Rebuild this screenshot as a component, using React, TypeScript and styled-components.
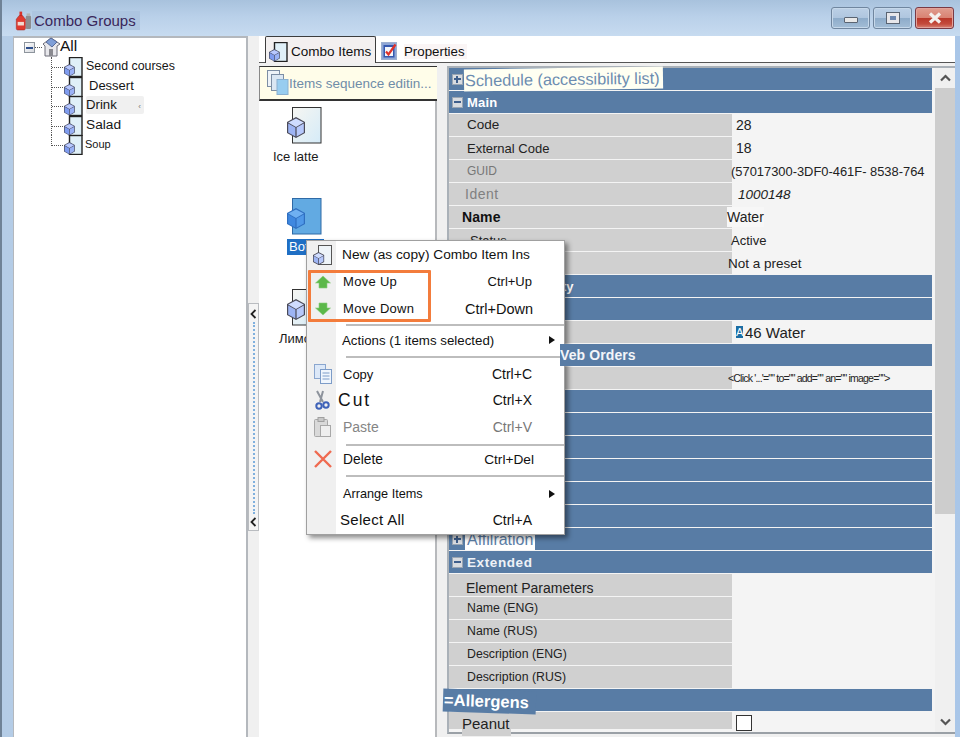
import React from "react";
import styled, { createGlobalStyle } from "styled-components";

const Global = createGlobalStyle`
  html, body { margin: 0; padding: 0; background: #a9c6e8; }
  body { font-family: "Liberation Sans", Arial, sans-serif; color: #1c1c1c; }
  * { box-sizing: border-box; }
`;

const Window = styled.div`
  position: relative;
  width: 960px;
  height: 737px;
  display: flex;
  flex-direction: column;
  overflow: hidden;
  background: linear-gradient(90deg, #b4cce6 0%, #bcd2ea 50%, #a9c6e8 100%);
  border-left: 2px solid #6f8296;
`;

const TitleBar = styled.div`
  height: 36px;
  display: flex;
  align-items: center;
  padding: 5px 6px 0 13px;
  background: linear-gradient(180deg, #a8c2dd 0%, #b9d0e9 45%, #c7dbf0 100%);
`;

const TitleText = styled.span`
  padding: 1px 4px 1px 2px;
  font-size: 15px;
  color: #39265a;
  background: #adc5e0;
`;

const Controls = styled.div`
  margin-left: auto;
  margin-top: -5px;
  display: flex;
  gap: 3px;
`;

const CtlButton = styled.div<{ $close?: boolean }>`
  width: 39px;
  height: 22px;
  border-radius: 3px;
  display: flex;
  align-items: center;
  justify-content: center;
  border: 1px solid ${(p) => (p.$close ? "#7a3a44" : "#70869f")};
  box-shadow: inset 0 0 0 1px ${(p) => (p.$close ? "#e2a39b" : "#c6d8ea")};
  background: ${(p) =>
    p.$close
      ? "linear-gradient(180deg,#e09d90 0%,#d98273 48%,#b9372a 52%,#c44b3c 80%,#d88476 100%)"
      : "linear-gradient(180deg,#bcd0e6 0%,#afc6df 48%,#8eacca 52%,#a3bdd6 100%)"};
`;

const MinGlyph = styled.div`
  width: 14px;
  height: 6px;
  margin-top: 3px;
  border: 1px solid #5a6472;
  border-radius: 1px;
  background: #e8e8e8;
`;

const MaxGlyph = styled.div`
  width: 12px;
  height: 10px;
  border: 3px solid #e6e6ea;
  outline: 1px solid #5a6472;
  background: #6f89b0;
`;

const Body = styled.div`
  flex: 1;
  display: flex;
  min-height: 0;
  margin: 0 5px 0 11px;
  background: #f0f0f0;
`;

const TreePanel = styled.div`
  width: 235px;
  background: #fff;
  border-top: 2px solid #b4b8bd;
  border-left: 1px solid #b4b8bd;
  border-right: 2px solid #b4b8bd;
  padding: 0 0 0 10px;
`;

const TreeRoot = styled.div`
  display: flex;
  align-items: center;
  height: 19px;
`;

const Expander = styled.span`
  width: 11px;
  height: 11px;
  border: 1px solid #8d949c;
  background: linear-gradient(135deg, #fff, #d5d8dd);
  display: flex;
  align-items: center;
  justify-content: center;
  &::before {
    content: "";
    width: 7px;
    height: 2px;
    background: #2e4f8c;
  }
`;

const RootDash = styled.span`
  width: 7px;
  border-top: 1px dotted #555;
`;

const RootText = styled.span`
  font-size: 15.5px;
  color: #111;
  margin-left: -1px;
  margin-top: -3px;
`;

const TreeChildren = styled.div`
  margin-left: 27px;
`;

const TreeRow = styled.div<{ $h: number }>`
  display: flex;
  align-items: flex-start;
  height: ${(p) => p.$h}px;
`;

const Connector = styled.span<{ $last?: boolean }>`
  position: relative;
  width: 13px;
  height: ${(p) => (p.$last ? "11px" : "100%")};
  flex: none;
  border-left: 1px dotted #555;
  &::after {
    content: "";
    position: absolute;
    left: 0;
    top: 10px;
    width: 13px;
    border-top: 1px dotted #555;
  }
`;

const TreeLabel = styled.span<{ $size: number; $pad: number; $shade?: boolean }>`
  font-size: ${(p) => p.$size}px;
  margin-left: ${(p) => p.$pad}px;
  line-height: 18px;
  height: 18px;
  color: #161616;
  display: flex;
  justify-content: space-between;
  width: ${(p) => (p.$shade ? "58px" : "auto")};
  background: ${(p) => (p.$shade ? "#f0f0f0" : "transparent")};
  border-radius: 2px;
`;

const Tick = styled.span`
  font-size: 8px;
  color: #777;
  padding: 2px 3px 0 0;
`;

const Splitter = styled.div`
  width: 11px;
  display: flex;
  flex-direction: column;
  padding-top: 267px;
`;

const SplitStrip = styled.div`
  height: 228px;
  width: 11px;
  border: 1px solid #b9bcc0;
  background: #f4f4f4;
  display: flex;
  flex-direction: column;
  align-items: center;
  justify-content: space-between;
  padding: 5px 0 3px;
`;

const SplitDots = styled.span`
  flex: 1;
  margin: 3px 0;
  border-left: 2px dotted #7fb0de;
`;

const Right = styled.div`
  flex: 1;
  min-width: 0;
  display: flex;
  flex-direction: column;
`;

const TabBar = styled.div`
  height: 27px;
  flex: none;
  display: flex;
  align-items: flex-end;
  padding-left: 6px;
  background: #fff;
  border-bottom: 1px solid #555;
`;

const ActiveTab = styled.div`
  height: 27px;
  width: 111px;
  margin-bottom: -1px;
  padding: 3px 0 0 3px;
  display: flex;
  gap: 3px;
  align-items: center;
  background: #f3f0f0;
  border: 1px solid #3d3d3d;
  border-bottom: none;
  border-radius: 2px 2px 0 0;
  font-size: 13.5px;
  color: #111;
`;

const PlainTab = styled.div`
  height: 24px;
  padding: 2px 0 0 5px;
  display: flex;
  align-items: center;
  gap: 6px;
  font-size: 13.3px;
  color: #111;
`;

const TabName = styled.span`
  background: #faf5f5;
  padding-right: 2px;
`;

const Content = styled.div`
  flex: 1;
  min-height: 0;
  display: flex;
  padding-top: 3px;
  background: #f0f0f0;
`;

const Middle = styled.div`
  width: 178px;
  flex: none;
  display: flex;
  flex-direction: column;
`;

const Hint = styled.div`
  height: 35px;
  flex: none;
  padding-left: 7px;
  display: flex;
  align-items: center;
  background: #fffde9;
  border-top: 1px solid #333;
  border-bottom: 2px solid #333;
  border-left: 1px solid #888;
  font-size: 13.5px;
  color: #6f8ca8;
  white-space: nowrap;
`;

const ItemList = styled.div`
  flex: 1;
  background: #fff;
  border-right: 2px solid #b7b9bc;
  padding-top: 6px;
`;

const Item = styled.div`
  height: 91px;
`;

const ItemIcon = styled.div`
  padding-left: 28px;
  height: 39px;
`;

const ItemLabel = styled.div<{ $x: number; $sel?: boolean }>`
  display: inline-block;
  margin-left: ${(p) => p.$x}px;
  margin-top: ${(p) => (p.$sel ? "-1px" : "3px")};
  padding: 0 2px;
  font-size: 13px;
  line-height: 16px;
  white-space: nowrap;
  color: ${(p) => (p.$sel ? "#fff" : "#1a1a1a")};
  background: ${(p) => (p.$sel ? "#1f6fc4" : "transparent")};
`;

const PropPanel = styled.div`
  margin: 0 0 3px 10px;
  flex: 1;
  min-width: 0;
  display: flex;
  background: #f4f4f4;
  border-top: 2px solid #aab1b8;
  border-left: 2px solid #aab1b8;
  border-bottom: 2px solid #9aa0a6;
`;

const Grid = styled.div`
  width: 483px;
  flex: none;
  display: flex;
  flex-direction: column;
  gap: 1px;
`;

const Section = styled.div`
  height: 22px;
  flex: none;
  display: flex;
  align-items: center;
  background: #587ca5;
  color: #fff;
`;

const SecBox = styled.span<{ $plus?: boolean }>`
  position: relative;
  width: 11px;
  height: 11px;
  margin-left: 3px;
  flex: none;
  background: #d9dce0;
  border: 1px solid #9aa5b2;
  &::before {
    content: "";
    position: absolute;
    left: 1px;
    top: 3px;
    width: 7px;
    height: 2px;
    background: #3f5f8c;
  }
  &::after {
    content: "";
    display: ${(p) => (p.$plus ? "block" : "none")};
    position: absolute;
    left: 3px;
    top: 1px;
    width: 2px;
    height: 7px;
    background: #3f5f8c;
  }
`;

const SecText = styled.span`
  margin-left: 4px;
  font-size: 13px;
  font-weight: 700;
  letter-spacing: 0.2px;
`;

const SecStretched = styled(SecText)`
  font-size: 13.5px;
  letter-spacing: 0.6px;
  color: #eef2f7;
`;

const SchedulePatch = styled.span`
  margin-left: 1px;
  height: 22px;
  padding: 0 3px 0 1px;
  display: flex;
  align-items: center;
  font-size: 16.3px;
  color: #6c8cb0;
  background: #fffff2;
  transform: rotate(-0.8deg);
`;

const AffilPatch = styled.span`
  margin-left: 2px;
  height: 21px;
  padding: 2px 2px 0;
  display: flex;
  align-items: center;
  font-size: 16px;
  color: #5c80a8;
  background: #fff;
`;

const TailText = styled.span<{ $x: number }>`
  margin-left: ${(p) => p.$x}px;
  font-size: 13px;
  font-weight: 700;
  white-space: nowrap;
`;

const WebOrders = styled.span`
  position: relative;
  z-index: 6;
  margin-left: 111px;
  height: 22px;
  display: flex;
  align-items: center;
  background: #587ca5;
  font-size: 14px;
  font-weight: 700;
  letter-spacing: 0.1px;
  color: #f2f5f9;
`;

const AllergensPatch = styled.div`
  position: relative;
  left: -6px;
  top: 1px;
  width: 93px;
  height: 23px;
  padding-left: 1px;
  display: flex;
  align-items: center;
  background: #587ca5;
  color: #fff;
  font-size: 16.5px;
  font-weight: 700;
  transform: rotate(1.8deg);
`;

const PropRow = styled.div<{ $short?: boolean }>`
  height: ${(p) => (p.$short ? "17px" : "22px")};
  flex: none;
  display: flex;
`;

const LabelCell = styled.div`
  width: 283px;
  flex: none;
  display: flex;
  align-items: center;
  background: #d0d0d0;
  white-space: nowrap;
`;

const LabelText = styled.span<{
  $x: number;
  $size: number;
  $color?: string;
  $bold?: boolean;
  $ls?: number;
  $dy?: number;
}>`
  margin-left: ${(p) => p.$x}px;
  font-size: ${(p) => p.$size}px;
  font-weight: ${(p) => (p.$bold ? 700 : 400)};
  letter-spacing: ${(p) => p.$ls ?? 0}px;
  color: ${(p) => p.$color ?? "#222"};
  transform: translateY(${(p) => p.$dy ?? 0}px);
`;

const PeanutPatch = styled.span`
  margin-left: 13px;
  padding-right: 1px;
  height: 24px;
  line-height: 24px;
  font-size: 15px;
  color: #222;
  background: #d0d0d0;
  align-self: flex-start;
`;

const ValueCell = styled.div`
  flex: 1;
  min-width: 0;
  display: flex;
  align-items: center;
  white-space: nowrap;
  background: #f4f4f4;
  position: relative;
`;

const ValueText = styled.span<{
  $x: number;
  $size: number;
  $italic?: boolean;
  $ls?: number;
  $patch?: boolean;
}>`
  margin-left: ${(p) => p.$x}px;
  font-size: ${(p) => p.$size}px;
  font-style: ${(p) => (p.$italic ? "italic" : "normal")};
  letter-spacing: ${(p) => p.$ls ?? 0}px;
  color: #222;
  background: ${(p) => (p.$patch ? "#f7f7f7" : "transparent")};
  line-height: ${(p) => (p.$patch ? "20px" : "normal")};
`;

const BlueA = styled.span`
  margin-left: 4px;
  width: 7px;
  height: 12px;
  background: #1c6ea4;
  color: #fff;
  font-size: 11px;
  line-height: 12px;
  overflow: hidden;
`;

const Check = styled.span`
  position: absolute;
  left: 4px;
  top: 3px;
  width: 16px;
  height: 16px;
  background: #fff;
  border: 1px solid #333;
`;

const Scroll = styled.div`
  margin-left: 3px;
  width: 20px;
  flex: none;
  display: flex;
  flex-direction: column;
  background: #f0f0f0;
`;

const ScrollBtn = styled.div`
  height: 20px;
  flex: none;
  display: flex;
  align-items: center;
  justify-content: center;
`;

const Thumb = styled.div`
  height: 426px;
  flex: none;
  background: #cdcdcd;
`;

const ScrollGap = styled.div`
  flex: 1;
`;

const Menu = styled.div`
  position: absolute;
  z-index: 5;
  left: 304px;
  top: 240px;
  width: 259px;
  height: 295px;
  display: flex;
  flex-direction: column;
  border: 1px solid #a0a0a0;
  background: linear-gradient(90deg, #f0f0f0 29px, #fff 29px);
  box-shadow: 3px 3px 5px rgba(0, 0, 0, 0.45);
`;

const MenuRow = styled.div<{ $h: number }>`
  height: ${(p) => p.$h}px;
  flex: none;
  display: flex;
  align-items: center;
  color: #111;
`;

const MenuIcon = styled.span`
  width: 29px;
  flex: none;
  display: flex;
  justify-content: center;
  padding-left: 2px;
`;

const MenuLabel = styled.span<{ $x: number; $size: number; $ls?: number; $muted?: boolean }>`
  margin-left: ${(p) => p.$x}px;
  font-size: ${(p) => p.$size}px;
  letter-spacing: ${(p) => p.$ls ?? 0}px;
  color: ${(p) => (p.$muted ? "#858585" : "#111")};
  white-space: nowrap;
`;

const Shortcut = styled.span<{ $size?: number; $muted?: boolean; $right?: number }>`
  margin-left: auto;
  margin-right: ${(p) => p.$right ?? 32}px;
  font-size: ${(p) => p.$size ?? 13}px;
  color: ${(p) => (p.$muted ? "#777" : "#111")};
  white-space: nowrap;
`;

const Caret = styled.span`
  margin-left: auto;
  margin-right: 9px;
  width: 0;
  height: 0;
  border-left: 6px solid #111;
  border-top: 4.5px solid transparent;
  border-bottom: 4.5px solid transparent;
`;

const MenuSep = styled.div<{ $h: number }>`
  height: ${(p) => p.$h}px;
  flex: none;
  display: flex;
  align-items: center;
  padding-left: 39px;
  &::before {
    content: "";
    flex: 1;
    height: 2px;
    background: #bdbdbd;
  }
`;

const Highlight = styled.div`
  position: absolute;
  left: 1px;
  top: 29px;
  width: 123px;
  height: 52px;
  border: 3px solid #f37c3c;
  border-radius: 1px;
  pointer-events: none;
`;

const Cube = ({ x, y, s = 1, sel, small }: { x: number; y: number; s?: number; sel?: boolean; small?: boolean }) => (
  <g transform={`translate(${x} ${y}) scale(${s})`}>
    <polygon points="9,0 18,5 18,16 9,21 0,16 0,5" fill={small ? "#4a4f68" : sel ? "#2f6fc0" : "#4a4a58"} />
    <polygon points="9,1.5 16.8,5.5 9,10 1.2,5.5" fill={sel ? "#6fb0f2" : small ? "#b8c8ff" : "#cfdcff"} />
    <polygon points="1.2,6.5 8.4,10.6 8.4,19.4 1.2,15.4" fill={sel ? "#3f88e0" : small ? "#7f9cf0" : "#9db4f4"} />
    <polygon points="9.6,10.6 16.8,6.5 16.8,15.4 9.6,19.4" fill={sel ? "#4f98e8" : small ? "#9ab2f6" : "#b6c8fb"} />
  </g>
);

const DocCube = ({ sel }: { sel?: boolean }) => (
  <svg width="35" height="37" viewBox="0 0 35 37">
    <defs>
      <linearGradient id="docg" x1="0" y1="0" x2="1" y2="1">
        <stop offset="0" stopColor="#f6f6f2" />
        <stop offset="1" stopColor="#d5ebf8" />
      </linearGradient>
    </defs>
    <rect
      x="5.5"
      y="0.5"
      width="28.5"
      height="35.5"
      fill={sel ? "#62aae2" : "url(#docg)"}
      stroke={sel ? "#2f6aa6" : "#333"}
    />
    <Cube x={0} y={10} sel={sel} />
  </svg>
);

const TreeDoc = () => (
  <svg width="19" height="20" viewBox="0 0 19 20" style={{ flex: "none" }}>
    <rect x="5.5" y="0.5" width="12.5" height="19" fill="#e0f0f8" stroke="#222" strokeWidth="1.4" />
    <Cube x={0} y={7} s={0.6} small />
  </svg>
);

const HouseIcon = () => (
  <svg width="19" height="21" viewBox="0 0 19 21" style={{ flex: "none" }}>
    <polygon points="9,1 1,7 3,9 3,19 15,19 15,9 18,7" fill="#e8e8ec" stroke="#6c6c78" />
    <polygon points="4,5 9,1 15,5 10,10" fill="#7f9fd8" stroke="#5a6c98" />
    <rect x="7" y="12" width="4" height="7" fill="#8a8a90" />
  </svg>
);

const Bottle = () => (
  <svg width="17" height="22" viewBox="0 0 19 22" style={{ flex: "none" }}>
    <rect x="12" y="5" width="6" height="15" rx="1.5" fill="#8d8d90" />
    <rect x="13" y="2.5" width="4" height="3" fill="#b3b3b3" />
    <rect x="5" y="0.5" width="3" height="5" fill="#d8322a" />
    <path d="M4.5 5h4l3 4v10.5a1.5 1.5 0 0 1-1.5 1.5H3a1.5 1.5 0 0 1-1.5-1.5V9z" fill="#e03a30" stroke="#a42018" strokeWidth="0.6" />
    <rect x="3" y="12" width="7" height="4" fill="#f3d9d0" />
  </svg>
);

const PropsIcon = () => (
  <svg width="17" height="18" viewBox="0 0 17 18" style={{ flex: "none" }}>
    <rect x="0.5" y="0.5" width="15" height="17" fill="#8ea6d6" stroke="#9fb0d0" />
    <rect x="2.5" y="3" width="11" height="12.5" fill="#3558b0" />
    <rect x="4" y="5" width="8" height="9" fill="#f4f6fb" />
    <path d="M5 9.5l2.5 3 7-10" fill="none" stroke="#e0322a" strokeWidth="2.2" />
  </svg>
);

const HintIcon = () => (
  <svg width="22" height="26" viewBox="0 0 22 26" style={{ flex: "none" }}>
    <rect x="0.5" y="0.5" width="12" height="16" fill="#eef3f8" stroke="#7d8ea4" />
    <rect x="4.5" y="4.5" width="12" height="16" fill="#dbe7f3" stroke="#7d8ea4" />
    <rect x="10" y="9.5" width="11" height="15" fill="#98cdf0" stroke="#8ab0d0" />
  </svg>
);

const ArrowIcon = ({ down }: { down?: boolean }) => (
  <svg width="16" height="14" viewBox="0 0 16 14">
    <polygon
      points={down ? "4,1 12,1 12,6 15.5,6 8,13 0.5,6 4,6" : "8,1 15.5,8 12,8 12,13 4,13 4,8 0.5,8"}
      fill="#5cb84a"
      stroke="#8bcf7c"
      strokeWidth="0.6"
    />
  </svg>
);

const CopyIcon = () => (
  <svg width="18" height="20" viewBox="0 0 18 20">
    <rect x="0.5" y="0.5" width="11" height="14" fill="#dce8f8" stroke="#8aa6cf" />
    <rect x="6.5" y="5.5" width="11" height="14" fill="#f0f6fd" stroke="#7d9cc8" />
    <path d="M8.5 9h7M8.5 12h7M8.5 15h7" stroke="#7d9cc8" />
  </svg>
);

const ScissorsIcon = () => (
  <svg width="15" height="20" viewBox="0 0 15 20">
    <path d="M2 1l6 11M8 1L5 12" stroke="#8d939c" strokeWidth="2" fill="none" />
    <circle cx="4" cy="16" r="2.7" fill="none" stroke="#3e62b8" strokeWidth="2" />
    <circle cx="11" cy="15" r="2.7" fill="none" stroke="#3e62b8" strokeWidth="2" />
  </svg>
);

const PasteIcon = () => (
  <svg width="17" height="20" viewBox="0 0 17 20">
    <rect x="0.5" y="2.5" width="13" height="17" rx="1" fill="#d9d9d9" stroke="#a8a8a8" />
    <rect x="4" y="0.5" width="6" height="4" fill="#c8c8c8" stroke="#a0a0a0" />
    <rect x="6.5" y="8.5" width="10" height="11" fill="#efefef" stroke="#a8a8a8" />
  </svg>
);

const DeleteIcon = () => (
  <svg width="20" height="20" viewBox="0 0 20 20">
    <path d="M2 2l16 16M18 2L2 18" stroke="#ef6a50" strokeWidth="2.4" />
  </svg>
);

const Chevron = ({ down }: { down?: boolean }) => (
  <svg width="11" height="8" viewBox="0 0 11 8">
    <path d={down ? "M1 1.5l4.5 4.5L10 1.5" : "M1 6.5L5.5 2 10 6.5"} fill="none" stroke="#555" strokeWidth="2.2" />
  </svg>
);

const SplitArrow = () => (
  <svg width="7" height="10" viewBox="0 0 7 10" style={{ flex: "none" }}>
    <path d="M5.5 1L1.5 5l4 4" fill="none" stroke="#222" strokeWidth="1.8" />
  </svg>
);

const treeItems = [
  { t: "Second courses", size: 12.4, pad: 3, h: 20 },
  { t: "Dessert", size: 13, pad: 6, h: 19 },
  { t: "Drink", size: 13.2, pad: 3, shade: true, h: 20 },
  { t: "Salad", size: 13.7, pad: 3, h: 19 },
  { t: "Soup", size: 11, pad: 2, h: 20 },
];

type Row = { label?: string; x: number; size: number; color?: string; bold?: boolean; ls?: number; dy?: number };

const labelled: Record<string, Row> = {
  code: { label: "Code", x: 18, size: 13.5, dy: -1 },
  ext: { label: "External Code", x: 18, size: 13 },
  guid: { label: "GUID", x: 18, size: 12, color: "#777" },
  ident: { label: "Ident", x: 16, size: 14, color: "#808080", ls: 0.5 },
  name: { label: "Name", x: 13, size: 14, bold: true, color: "#111", ls: 0.1 },
  status: { label: "Status", x: 21, size: 13 },
  preset: { label: "Preset", x: 18, size: 13 },
};

const P = ({ r, children }: { r: Row; children?: React.ReactNode }) => (
  <PropRow>
    <LabelCell>
      <LabelText $x={r.x} $size={r.size} $color={r.color} $bold={r.bold} $ls={r.ls} $dy={r.dy}>
        {r.label}
      </LabelText>
    </LabelCell>
    <ValueCell>{children}</ValueCell>
  </PropRow>
);

const Blank = () => <Section />;

export default function App() {
  return (
    <Window>
      <Global />
      <TitleBar>
        <Bottle />
        <TitleText>Combo Groups</TitleText>
        <Controls>
          <CtlButton>
            <MinGlyph />
          </CtlButton>
          <CtlButton>
            <MaxGlyph />
          </CtlButton>
          <CtlButton $close>
            <svg width="16" height="12" viewBox="0 0 16 12">
              <path d="M3 1.5l10 9M13 1.5l-10 9" stroke="#f4f0ee" strokeWidth="3.2" />
            </svg>
          </CtlButton>
        </Controls>
      </TitleBar>
      <Body>
        <TreePanel>
          <TreeRoot>
            <Expander />
            <RootDash />
            <HouseIcon />
            <RootText>All</RootText>
          </TreeRoot>
          <TreeChildren>
            {treeItems.map((it, i) => (
              <TreeRow key={it.t} $h={it.h}>
                <Connector $last={i === treeItems.length - 1} />
                <TreeDoc />
                <TreeLabel $size={it.size} $pad={it.pad} $shade={it.shade}>
                  {it.t}
                  {it.shade && <Tick>‹</Tick>}
                </TreeLabel>
              </TreeRow>
            ))}
          </TreeChildren>
        </TreePanel>
        <Splitter>
          <SplitStrip>
            <SplitArrow />
            <SplitDots />
            <SplitArrow />
          </SplitStrip>
        </Splitter>
        <Right>
          <TabBar>
            <ActiveTab>
              <TreeDoc />
              Combo Items
            </ActiveTab>
            <PlainTab>
              <PropsIcon />
              <TabName>Properties</TabName>
            </PlainTab>
          </TabBar>
          <Content>
            <Middle>
              <Hint>
                <HintIcon />
                Items sequence editin...
              </Hint>
              <ItemList>
                <Item>
                  <ItemIcon>
                    <DocCube />
                  </ItemIcon>
                  <ItemLabel $x={12}>Ice latte</ItemLabel>
                </Item>
                <Item>
                  <ItemIcon>
                    <DocCube sel />
                  </ItemIcon>
                  <ItemLabel $x={28} $sel>
                    Bottle
                  </ItemLabel>
                </Item>
                <Item>
                  <ItemIcon>
                    <DocCube />
                  </ItemIcon>
                  <ItemLabel $x={18}>Лимонад</ItemLabel>
                </Item>
              </ItemList>
            </Middle>
            <PropPanel>
              <Grid>
                <Section>
                  <SecBox $plus />
                  <SchedulePatch>Schedule (accessibility list)</SchedulePatch>
                </Section>
                <Section>
                  <SecBox />
                  <SecText>Main</SecText>
                </Section>
                <P r={labelled.code}>
                  <ValueText $x={4} $size={14}>28</ValueText>
                </P>
                <P r={labelled.ext}>
                  <ValueText $x={4} $size={14}>18</ValueText>
                </P>
                <P r={labelled.guid}>
                  <ValueText $x={-1} $size={12.9}>(57017300-3DF0-461F- 8538-764</ValueText>
                </P>
                <P r={labelled.ident}>
                  <ValueText $x={6} $size={13.5} $italic>1000148</ValueText>
                </P>
                <P r={labelled.name}>
                  <ValueText $x={-5} $size={14} $patch>Water</ValueText>
                </P>
                <P r={labelled.status}>
                  <ValueText $x={-1} $size={13}>Active</ValueText>
                </P>
                <P r={labelled.preset}>
                  <ValueText $x={-4} $size={13.5}>Not a preset</ValueText>
                </P>
                <Section>
                  <TailText $x={45}>Accessibility</TailText>
                </Section>
                <Blank />
                <PropRow>
                  <LabelCell />
                  <ValueCell>
                    <BlueA>A</BlueA>
                    <ValueText $x={2} $size={15}>46 Water</ValueText>
                  </ValueCell>
                </PropRow>
                <Section>
                  <WebOrders>Veb Orders</WebOrders>
                </Section>
                <PropRow>
                  <LabelCell />
                  <ValueCell>
                    <ValueText $x={-4} $size={10.5} $ls={-0.8}>
                      {'<Click \'...\'="" to="" add="" an="" image="">'}
                    </ValueText>
                  </ValueCell>
                </PropRow>
                <Blank />
                <Blank />
                <Blank />
                <Blank />
                <Blank />
                <Blank />
                <Section>
                  <SecBox $plus />
                  <AffilPatch>Affilration</AffilPatch>
                </Section>
                <Section>
                  <SecBox />
                  <SecStretched>Extended</SecStretched>
                </Section>
                <P r={{ label: "Element Parameters", x: 17, size: 14, dy: 3 }} />
                <P r={{ label: "Name (ENG)", x: 18, size: 12.3 }} />
                <P r={{ label: "Name (RUS)", x: 18, size: 12.3 }} />
                <P r={{ label: "Description (ENG)", x: 18, size: 12.3 }} />
                <P r={{ label: "Description (RUS)", x: 18, size: 12.3 }} />
                <Section>
                  <AllergensPatch>=Allergens</AllergensPatch>
                </Section>
                <PropRow $short>
                  <LabelCell>
                    <PeanutPatch>Peanut</PeanutPatch>
                  </LabelCell>
                  <ValueCell>
                    <Check />
                  </ValueCell>
                </PropRow>
              </Grid>
              <Scroll>
                <ScrollBtn>
                  <Chevron />
                </ScrollBtn>
                <Thumb />
                <ScrollGap />
                <ScrollBtn>
                  <Chevron down />
                </ScrollBtn>
              </Scroll>
            </PropPanel>
          </Content>
        </Right>
      </Body>
      <Menu>
        <MenuRow $h={27}>
          <MenuIcon>
            <svg width="19" height="20" viewBox="0 0 19 20">
              <rect x="5.5" y="0.5" width="13" height="19" fill="#eef4f8" stroke="#555" />
              <Cube x={0} y={7} s={0.62} />
            </svg>
          </MenuIcon>
          <MenuLabel $x={6} $size={13.7}>New (as copy) Combo Item Ins</MenuLabel>
        </MenuRow>
        <MenuRow $h={27}>
          <MenuIcon>
            <ArrowIcon />
          </MenuIcon>
          <MenuLabel $x={7} $size={13} $ls={0.3}>Move Up</MenuLabel>
          <Shortcut>Ctrl+Up</Shortcut>
        </MenuRow>
        <MenuRow $h={27}>
          <MenuIcon>
            <ArrowIcon down />
          </MenuIcon>
          <MenuLabel $x={7} $size={13} $ls={0.3}>Move Down</MenuLabel>
          <Shortcut $size={14.5} $right={31}>Ctrl+Down</Shortcut>
        </MenuRow>
        <MenuSep $h={6} />
        <MenuRow $h={24}>
          <MenuIcon />
          <MenuLabel $x={6} $size={13.3}>Actions (1 items selected)</MenuLabel>
          <Caret />
        </MenuRow>
        <MenuSep $h={10} />
        <MenuRow $h={24}>
          <MenuIcon>
            <CopyIcon />
          </MenuIcon>
          <MenuLabel $x={7} $size={13}>Copy</MenuLabel>
          <Shortcut $size={14}>Ctrl+C</Shortcut>
        </MenuRow>
        <MenuRow $h={28}>
          <MenuIcon>
            <ScissorsIcon />
          </MenuIcon>
          <MenuLabel $x={2} $size={17.5} $ls={2}>Cut</MenuLabel>
          <Shortcut $size={14}>Ctrl+X</Shortcut>
        </MenuRow>
        <MenuRow $h={26}>
          <MenuIcon>
            <PasteIcon />
          </MenuIcon>
          <MenuLabel $x={7} $size={14} $muted>Paste</MenuLabel>
          <Shortcut $size={14} $muted>Ctrl+V</Shortcut>
        </MenuRow>
        <MenuSep $h={9} />
        <MenuRow $h={20}>
          <MenuIcon>
            <DeleteIcon />
          </MenuIcon>
          <MenuLabel $x={7} $size={13.8}>Delete</MenuLabel>
          <Shortcut $size={13.7} $right={30}>Ctrl+Del</Shortcut>
        </MenuRow>
        <MenuSep $h={14} />
        <MenuRow $h={21}>
          <MenuIcon />
          <MenuLabel $x={7} $size={12.7}>Arrange Items</MenuLabel>
          <Caret />
        </MenuRow>
        <MenuRow $h={31}>
          <MenuIcon />
          <MenuLabel $x={4} $size={15} $ls={0.3}>Select All</MenuLabel>
          <Shortcut $size={14}>Ctrl+A</Shortcut>
        </MenuRow>
        <Highlight />
      </Menu>
    </Window>
  );
}
